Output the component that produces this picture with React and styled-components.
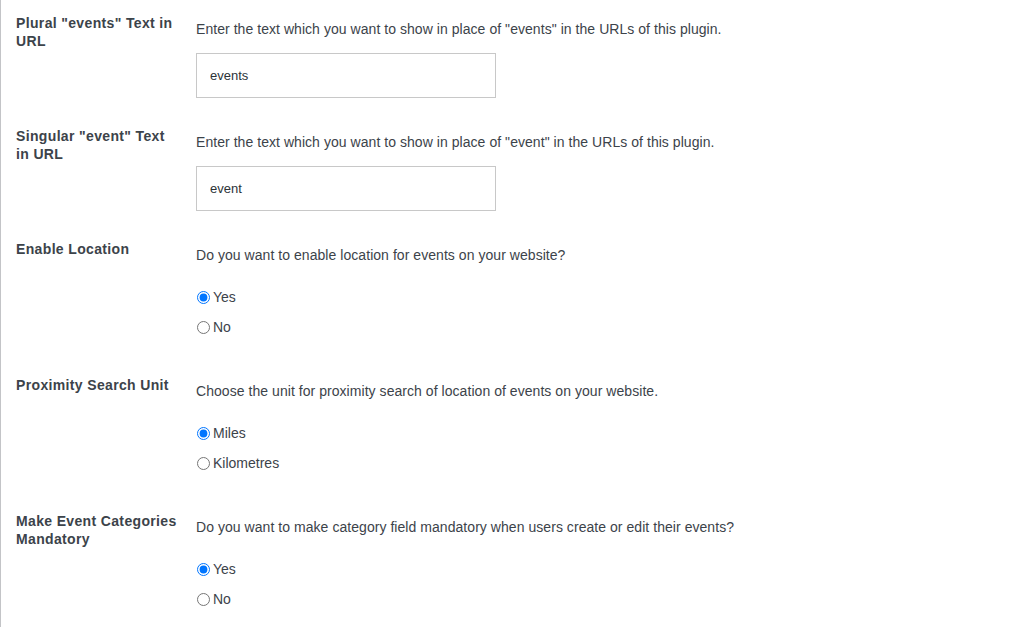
import React from "react";
import styled, { createGlobalStyle } from "styled-components";

const Global = createGlobalStyle`
  html, body { margin: 0; padding: 0; background: #fff; }
  body { font-family: "Liberation Sans", Arial, sans-serif; }
`;

const Page = styled.div`
  border-left: 1px solid #c3c4c7;
  min-height: 627px;
  padding-left: 15px;
  box-sizing: border-box;
  background: #fff;
`;

const Row = styled.div`
  display: grid;
  grid-template-columns: 180px 1fr;
  padding: 14px 0 15px;
`;

const Label = styled.div`
  font-size: 14px;
  font-weight: 700;
  letter-spacing: 0.35px;
  line-height: 18px;
  color: #3c434a;
  padding-right: 17px;
`;

const Field = styled.div`
  display: flex;
  flex-direction: column;
  align-items: flex-start;
  padding-top: 5px;
`;

const Desc = styled.p`
  margin: 0 0 14px;
  font-size: 14px;
  line-height: 20px;
  letter-spacing: 0.05px;
  color: #3c434a;
`;

const TextInput = styled.input`
  box-sizing: border-box;
  width: 300px;
  height: 45px;
  margin: 0;
  border: 1px solid #c8c8c8;
  border-radius: 0;
  padding: 0 13px;
  font-family: "Liberation Sans", Arial, sans-serif;
  font-size: 13px;
  color: #2c3338;
  background: #fff;
  outline: none;
`;

const RadioGroup = styled.div`
  margin: 3px 0 5px;
`;

const RadioLine = styled.label`
  display: flex;
  align-items: center;
  height: 30px;
  font-size: 14px;
  color: #3c434a;
`;

const Radio = styled.input`
  width: 13px;
  height: 13px;
  margin: 0 3px 0 1px;
  accent-color: #0075ff;
`;

const rows = [
  {
    label: 'Plural "events" Text in URL',
    desc: 'Enter the text which you want to show in place of "events" in the URLs of this plugin.',
    input: "events",
  },
  {
    label: 'Singular "event" Text in URL',
    desc: 'Enter the text which you want to show in place of "event" in the URLs of this plugin.',
    input: "event",
  },
  {
    label: "Enable Location",
    desc: "Do you want to enable location for events on your website?",
    options: ["Yes", "No"],
  },
  {
    label: "Proximity Search Unit",
    desc: "Choose the unit for proximity search of location of events on your website.",
    options: ["Miles", "Kilometres"],
  },
  {
    label: "Make Event Categories Mandatory",
    desc: "Do you want to make category field mandatory when users create or edit their events?",
    options: ["Yes", "No"],
  },
];

export default function App() {
  return (
    <>
      <Global />
      <Page>
        {rows.map((r, i) => (
          <Row key={i}>
            <Label>{r.label}</Label>
            <Field>
              <Desc>{r.desc}</Desc>
              {r.input && <TextInput type="text" defaultValue={r.input} />}
              {r.options && (
                <RadioGroup>
                  {r.options.map((o, j) => (
                    <RadioLine key={o}>
                      <Radio type="radio" name={`g${i}`} defaultChecked={j === 0} />
                      {o}
                    </RadioLine>
                  ))}
                </RadioGroup>
              )}
            </Field>
          </Row>
        ))}
      </Page>
    </>
  );
}
